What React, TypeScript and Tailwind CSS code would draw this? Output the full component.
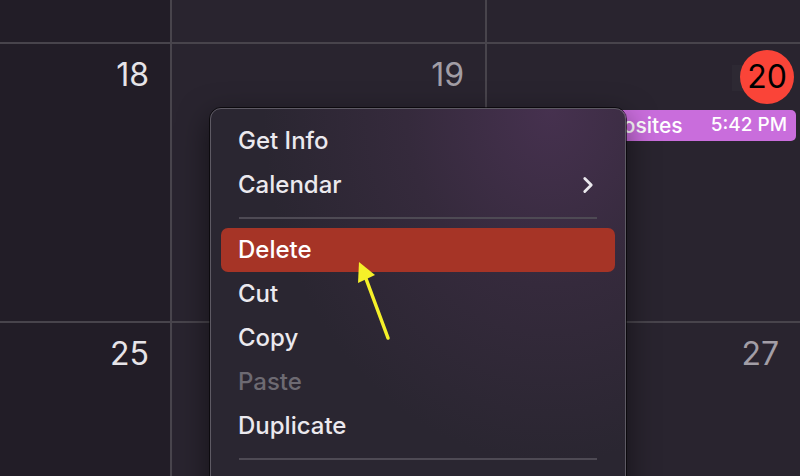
import { ChevronRight } from 'lucide-react';

const font = { fontFamily: 'Inter, "Noto Sans", sans-serif' };

interface MenuItem {
  label: string;
  kind?: 'item' | 'separator';
  disabled?: boolean;
  active?: boolean;
  submenu?: boolean;
}

const items: MenuItem[] = [
  { label: 'Get Info' },
  { label: 'Calendar', submenu: true },
  { label: '', kind: 'separator' },
  { label: 'Delete', active: true },
  { label: 'Cut' },
  { label: 'Copy' },
  { label: 'Paste', disabled: true },
  { label: 'Duplicate' },
  { label: '', kind: 'separator' },
];

const DayCell = ({ day, muted, dark, children }: { day?: string; muted?: boolean; dark?: boolean; children?: React.ReactNode }) => (
  <div className={`relative flex flex-col ${dark ? 'bg-[#221d27]' : 'bg-[#29242f]'}`}>
    {day && (
      <div
        className={`flex justify-end pr-[21px] pt-[14px] text-[32px] leading-[34px] ${muted ? 'text-[#a29ea6]' : 'text-[#e6e4e8]'}`}
      >
        {day}
      </div>
    )}
    {children}
  </div>
);

export default function App() {
  return (
    <div className="relative w-[800px] h-[476px] overflow-hidden bg-[#29242f]" style={font}>
      {/* calendar grid */}
      <div className="grid h-full grid-cols-[170px_313px_1fr] grid-rows-[42px_277px_1fr] gap-[2px] bg-[#48444c]">
        <DayCell dark />
        <DayCell />
        <DayCell />

        <DayCell day="18" dark />
        <DayCell day="19" muted />
        <div className="relative bg-[#29242f]">
          <div className="flex justify-end pr-[6px] pt-[6px]">
            <div className="mr-[-6px] mt-[15px] h-[26px] w-[14px] bg-[#2d2933]" />
            <div className="flex h-[54px] w-[54px] items-center justify-center rounded-full bg-[#fa4438] text-[32px] text-black">
              20
            </div>
          </div>
          <div className="ml-[4px] mr-[4px] mt-[6px] flex h-[31px] items-center justify-between rounded-[5px] bg-[#c96ddc] pl-[8px] pr-[9px] text-white">
            <span className="text-[21px] font-medium">Photo Composites</span>
            <span className="text-[19px] font-medium">5:42 PM</span>
          </div>
        </div>

        <DayCell day="25" dark />
        <DayCell day="26" />
        <DayCell day="27" muted />
      </div>

      {/* context menu */}
      <div className="absolute left-[209px] top-[107px] w-[418px] h-[420px] rounded-[12px] border border-black/70 shadow-[0_10px_30px_rgba(0,0,0,0.5)]">
        <div className="h-full w-full rounded-[11px] border border-[#5e5a64] bg-[radial-gradient(ellipse_at_82%_0%,#46314f_0%,#352a3c_30%,#2a2631_60%,#2a2631_100%)] px-[10px] pt-[10px]">
          {items.map((item, i) =>
            item.kind === 'separator' ? (
              <div key={i} className="flex h-[21px] items-center px-[18px]">
                <div className="h-[2px] w-full bg-[#4e4a54]" />
              </div>
            ) : (
              <div
                key={i}
                className={`flex h-[44px] items-center justify-between rounded-[7px] pl-[17px] pr-[14px] text-[24px] font-medium ${
                  item.active ? 'bg-[#a63426] text-white' : item.disabled ? 'text-[#6d6a72]' : 'text-[#ebe9ee]'
                }`}
              >
                <span>{item.label}</span>
                {item.submenu && <ChevronRight className="h-[26px] w-[26px] text-[#ebe9ee]" strokeWidth={2.6} />}
              </div>
            )
          )}
        </div>
      </div>

      {/* annotation arrow */}
      <svg className="absolute left-0 top-0" width="800" height="476" viewBox="0 0 800 476">
        <line x1="388" y1="338" x2="365" y2="276" stroke="#f5f029" strokeWidth="3.5" strokeLinecap="round" />
        <polygon points="359,262 375,275 358,283" fill="#f5f029" />
      </svg>
    </div>
  );
}
